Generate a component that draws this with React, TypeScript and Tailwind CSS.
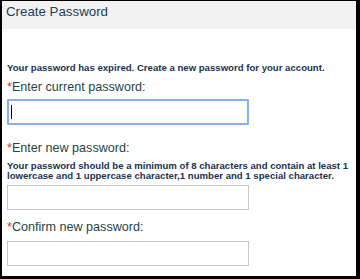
export default function App() {
  return (
    <div className="w-[360px] h-[279px] bg-black pt-[1px] pl-[2px] pr-[4px] pb-[3px] font-['Liberation_Sans',Arial,sans-serif]">
      <div className="h-full bg-white flex flex-col">
        {/* Header */}
        <div className="h-[28px] bg-[#f2f2f2] pl-[4px] pt-[2px]">
          <h1 className="text-[13.3px] leading-[17px] text-[#1d3d5a]">Create Password</h1>
        </div>

        {/* Body */}
        <div className="pl-[5px] flex flex-col">
          <p className="mt-[33px] text-[9.6px] leading-[12px] font-bold text-[#1b3350]">
            Your password has expired. Create a new password for your account.
          </p>

          <label className="mt-[6px] text-[12.6px] leading-[15px] text-[#264545]">
            <span className="text-[#e0301e]">*</span>Enter current password:
          </label>
          <div className="mt-[4px] w-[242px] h-[26px] border-2 border-[#8aaef0] rounded-[1px] flex items-center pl-[2px]">
            <span className="w-[1px] h-[14px] bg-black" />
          </div>

          <label className="mt-[16px] text-[12.6px] leading-[15px] text-[#264545]">
            <span className="text-[#e0301e]">*</span>Enter new password:
          </label>
          <p className="mt-[5px] text-[9.6px] leading-[9.5px] font-bold text-[#1b3350]">
            Your password should be a minimum of 8 characters and contain at least 1 lowercase and 1 uppercase character,1 number and 1 special character.
          </p>
          <div className="mt-[5px] w-[242px] h-[25px] border border-[#c8c8c8]" />

          <label className="mt-[10px] text-[12.6px] leading-[15px] text-[#264545]">
            <span className="text-[#e0301e]">*</span>Confirm new password:
          </label>
          <div className="mt-[6px] w-[242px] h-[25px] border border-[#c8c8c8]" />
        </div>
      </div>
    </div>
  );
}
